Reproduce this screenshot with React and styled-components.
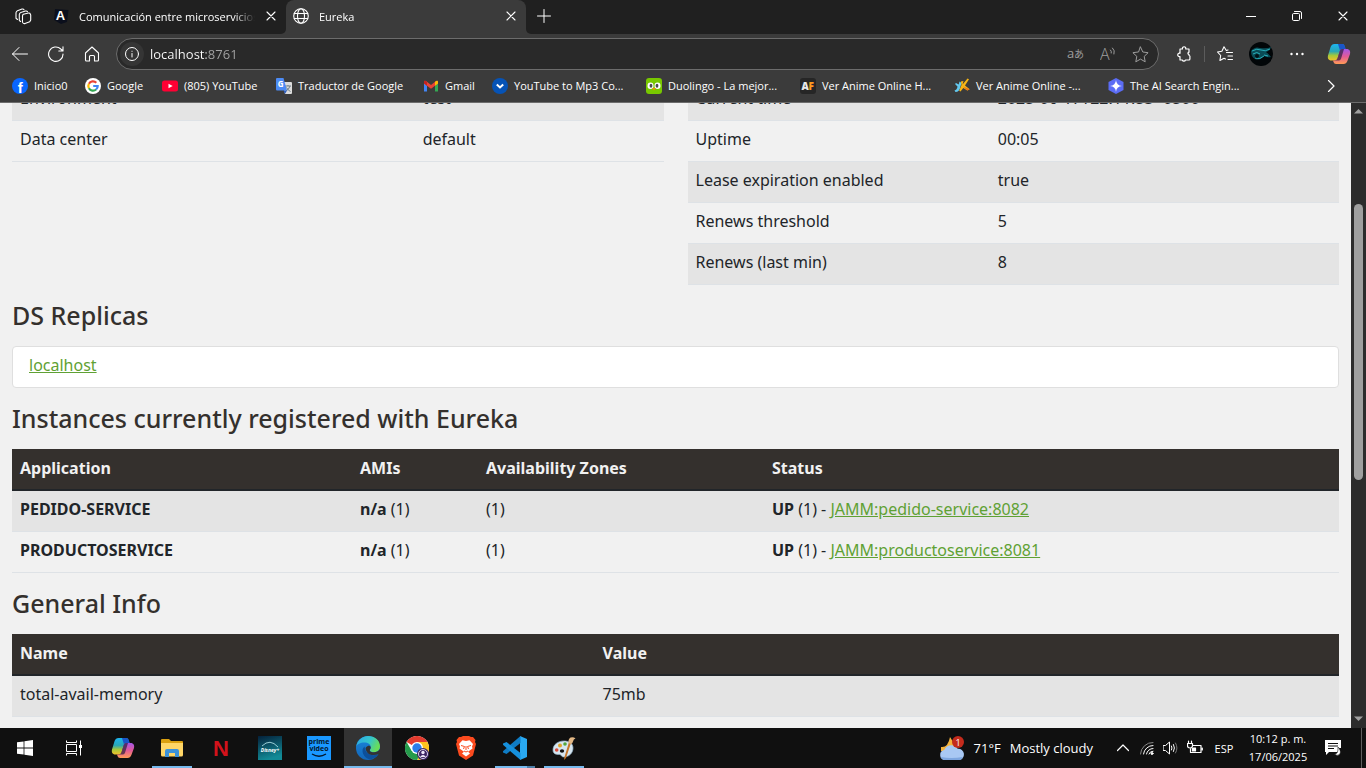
import React from 'react';
import styled, { createGlobalStyle } from 'styled-components';

const UI_FONT = '"Open Sans", "Noto Sans", sans-serif';
const PAGE_FONT = '"Noto Sans", "Open Sans", sans-serif';

const GlobalStyle = createGlobalStyle`
  *, *::before, *::after { box-sizing: border-box; }
  body { margin: 0; background: #f1f1f1; font-family: ${UI_FONT}; }
  button, input { font-family: inherit; }
  svg { display: block; flex: none; }
`;

const Screen = styled.div`
  display: flex;
  flex-direction: column;
  height: 100vh;
  overflow: hidden;
`;

/* ---------- tab strip ---------- */
const TabStrip = styled.nav`
  display: flex;
  height: 34px;
  flex: none;
  background: #3b3b3b;
  color: #fff;
`;
const StripStart = styled.div`
  display: flex;
  background: #202020;
  border-radius: 0 0 5px 0;
`;
const StripEnd = styled.div`
  display: flex;
  flex: 1;
  background: #202020;
  border-radius: 0 0 0 5px;
`;
const ActiveBack = styled.div`
  background: linear-gradient(#202020 10px, #3b3b3b 10px);
`;
const IconButton = styled.button`
  display: flex;
  align-items: center;
  justify-content: center;
  flex: none;
  width: ${(p) => p.$w || 36}px;
  height: 32px;
  padding: 0;
  border: 0;
  background: none;
  color: ${(p) => p.$color || '#fff'};
`;
const Tab = styled.div`
  display: flex;
  align-items: center;
  gap: 10px;
  width: 240px;
  height: 34px;
  padding: 0 9px 2px 7px;
  font-size: 11px;
  background: ${(p) => (p.$active ? '#3b3b3b' : 'transparent')};
  border-radius: 8px 8px 0 0;
`;
const TabTitle = styled.span`
  flex: 1;
  overflow: hidden;
  white-space: nowrap;
  mask-image: linear-gradient(90deg, #000 88%, transparent);
`;
const CloseButton = styled(IconButton)`
  width: 12px;
  height: 16px;
`;
const WindowControls = styled.div`
  display: flex;
  margin-left: auto;
`;

/* ---------- toolbar ---------- */
const Toolbar = styled.header`
  display: flex;
  align-items: center;
  height: 40px;
  flex: none;
  padding: 0 2px;
  background: #3b3b3b;
`;
const AddressBar = styled.form`
  display: flex;
  align-items: center;
  flex: 1;
  height: 32px;
  margin: 0 8px 0 6px;
  padding-right: 2px;
  border: 1px solid #6c6c6c;
  border-radius: 16px;
  background: #292929;
`;
const SiteInfo = styled(IconButton)`
  width: 24px;
  height: 24px;
  margin: 0 6px 0 3px;
  border-radius: 12px;
  background: #353535;
`;
const UrlInput = styled.input`
  flex: 1;
  min-width: 0;
  padding: 0;
  border: 0;
  outline: 0;
  font-size: 13px;
  color: transparent;
  background: linear-gradient(90deg, #fff 56px, #a6a6a6 56px);
  background-clip: text;
`;
const Divider = styled.span`
  width: 1px;
  height: 16px;
  margin: 0 3px;
  background: #5c5c5c;
`;
const Bookmarks = styled.nav`
  display: flex;
  align-items: center;
  height: 29px;
  flex: none;
  padding: 0 18px 4px 12px;
  background: #3b3b3b;
  border-bottom: 1px solid #6c6c6c;
`;
const Bookmark = styled.a`
  display: flex;
  align-items: center;
  gap: 6px;
  flex: none;
  width: ${(p) => p.$w}px;
  font-size: 11px;
  line-height: 16px;
  color: #fff;
  text-decoration: none;
  white-space: nowrap;
`;

/* ---------- page ---------- */
const Viewport = styled.div`
  display: flex;
  flex: 1;
  min-height: 0;
  overflow: hidden;
`;
const Page = styled.main`
  flex: 1;
  min-width: 0;
  margin-top: -23px;
  padding: 0 12px;
  font-family: ${PAGE_FONT};
  font-size: 16px;
  line-height: 24px;
  color: #212529;
`;
const Columns = styled.section`
  display: grid;
  grid-template-columns: 1fr 1fr;
  gap: 24px;
  align-items: start;
`;
const Heading = styled.h1`
  margin: 15px 0 16px;
  font-size: 25px;
  line-height: 30px;
  font-weight: 500;
  color: #34302d;
`;
const DataTable = styled.table`
  width: 100%;
  table-layout: fixed;
  border-collapse: separate;
  border-spacing: 0;
`;
const Th = styled.th`
  width: ${(p) => p.$w || 'auto'};
  padding: 7px 8px 9px;
  text-align: left;
  color: #f1f1f1;
  background: #34302d;
  border-bottom: 2px solid #212529;
`;
const Td = styled.td`
  width: ${(p) => p.$w || 'auto'};
  padding: 6px 8px 10px;
  border-bottom: 1px solid #dee2e6;
  white-space: nowrap;
`;
const Row = styled.tr`
  background: ${(p) => (p.$striped ? '#e4e4e4' : 'transparent')};
`;
const GreenLink = styled.a`
  color: #5fa134;
  text-decoration: underline;
`;
const ReplicaList = styled.ul`
  margin: 0;
  padding: 0;
  list-style: none;
  background: #fff;
  border: 1px solid #dfdfdf;
  border-radius: 4px;
`;
const ReplicaItem = styled.li`
  padding: 6px 16px 10px;
`;
const ScrollTrack = styled.div`
  display: flex;
  flex-direction: column;
  align-items: center;
  width: 15px;
  padding: 4px 0 5px;
  background: #2c2c2c;
`;
const TrackSpace = styled.div`
  flex: ${(p) => p.$part};
`;
const ScrollThumb = styled.div`
  flex: 276;
  width: 9px;
  border-radius: 5px;
  background: #9f9f9f;
`;

/* ---------- taskbar ---------- */
const Taskbar = styled.footer`
  display: flex;
  height: 40px;
  flex: none;
  background: #101010;
  color: #fff;
`;
const Apps = styled.div`
  display: flex;
  gap: 1px;
  padding-left: 1px;
`;
const AppButton = styled.button`
  display: flex;
  position: relative;
  align-items: center;
  justify-content: center;
  width: 48px;
  height: 40px;
  padding: 0;
  border: 0;
  background: ${(p) => (p.$active ? '#333' : 'none')};
  &::after {
    content: '';
    position: absolute;
    bottom: 0;
    left: ${(p) => (p.$active ? 0 : 4)}px;
    right: ${(p) => (p.$active ? 0 : 4)}px;
    height: 2px;
    background: ${(p) => (p.$stacked ? 'linear-gradient(90deg, #76b9ed 32px, #4d7fa8 32px)' : '#76b9ed')};
    display: ${(p) => (p.$open ? 'block' : 'none')};
  }
`;
const Tray = styled.div`
  display: flex;
  align-items: center;
  margin-left: auto;
`;
const Weather = styled.button`
  display: flex;
  align-items: center;
  gap: 9px;
  height: 40px;
  padding: 0;
  margin-right: 18px;
  border: 0;
  background: none;
  color: #fff;
  font-size: 13px;
`;
const Clock = styled.button`
  width: 74px;
  height: 38px;
  padding: 0 0 1px;
  border: 0;
  background: none;
  color: #fff;
  font-size: 11px;
  line-height: 18px;
`;
const ShowDesktop = styled.button`
  width: 5px;
  height: 40px;
  margin-left: 10px;
  padding: 0;
  border: 0;
  border-left: 1px solid #5e5e5e;
  background: none;
`;
const TrayText = styled.span`
  font-size: 11px;
`;

/* ---------- icons ---------- */
const Line = ({ s = 20, w = 1, vb = 20, children, ...rest }) => (
  <svg width={s} height={s} viewBox={`0 0 ${vb} ${vb}`} fill="none" stroke="currentColor" strokeWidth={w} strokeLinecap="round" strokeLinejoin="round" aria-hidden="true" {...rest}>
    {children}
  </svg>
);
const Art = ({ s = 16, vb = s, children }) => (
  <svg width={s} height={s} viewBox={`0 0 ${vb} ${vb}`} aria-hidden="true">{children}</svg>
);
const Workspaces = () => (
  <Line s={18} vb={18} w={1.1}>
    <path d="M9.300 7.200 14.500 6q1.500-.2 1.700 1l.5 1v5l-1 1.800-4.700 1.800q-1.500.3-2.200-.8-.6-1-.3-3V9q.2-1.500 .8-1.800Z" />
    <path d="M6.500 14.500 5.300 13.300V7.500q.2-1.500 1.500-2L11.500 4q1.500-.3 2 .8M3.500 12.500 2 11.300V5.700q.2-1.500 1.500-2L8 2q1.500-.3 2 .8" />
  </Line>
);
const Close = ({ s = 10 }) => <Line s={s} vb={10} w={1.1}><path d="m1 1 8 8M9 1 1 9" /></Line>;
const Globe = () => (
  <Line s={16} vb={16} w={1.1}>
    <circle cx="8" cy="8" r="7.300" /><ellipse cx="8" cy="8" rx="3.500" ry="7.300" /><path d="M1.300 5.500h13.400M1.300 10.500h13.400" />
  </Line>
);
const CopilotMark = ({ s }) => (
  <Art s={s} vb={24}>
    <defs>
      <linearGradient id="cpa" x1="0" y1="0" x2="0" y2="1"><stop offset="0" stopColor="#1db5f0" /><stop offset=".45" stopColor="#2aa7b5" /><stop offset=".7" stopColor="#a6c83a" /><stop offset="1" stopColor="#f2c12b" /></linearGradient>
      <linearGradient id="cpb" x1="0" y1="0" x2="0" y2="1"><stop offset="0" stopColor="#a456e8" /><stop offset=".5" stopColor="#e25a96" /><stop offset="1" stopColor="#ff9a55" /></linearGradient>
    </defs>
    <path d="M15 2q2 0 2.500 2l.9 3H15q-1.500 0-2 1.500l-2.500 8Q9.700 18.500 8 18.500H4.500C1.200 18.500.4 16 1 13.500L3.600 5Q4.700 2 7.500 2Z" fill="url(#cpa)" />
    <path d="M11 2h4.500q1.800 0 2.300 2l.9 3H15q-1.500 0-2 1.500Z" fill="#1a55c8" />
    <path d="M9 22q-2 0-2.500-2L6 18.500h2q1.700 0 2.500-2l2.500-8Q13.500 7 15 7h4.500c3.300 0 4.100 2.500 3.500 5L20.400 19q-1.100 3-3.900 3Z" fill="url(#cpb)" />
    <path d="M13 8.500 10.500 16.500q-.7 2-2.500 2h4q1.500 0 2-1.700L17 7h-2q-1.500 0-2 1.500Z" fill="#2b1f3c" opacity=".7" />
  </Art>
);
const Avatar = () => (
  <Art s={24}>
    <circle cx="12" cy="12" r="12" fill="#020608" />
    <path d="M2 9q4-5 9-3 7 1 11-1-1 4-5 5 3 2 5 5-4 1-7-1-4 5-9 3-4-2-4-8Z" fill="#0d5e6a" opacity=".8" />
    <path d="M3 9q5-3 9-1t9-1M4 12q4-3 7 0M15 13l4 1M6 16q5 2 9-2" fill="none" stroke="#2bb9c4" strokeWidth=".9" />
    <circle cx="8" cy="14" r="2" fill="#031216" />
  </Art>
);
const Facebook = () => (
  <Art><circle cx="8" cy="8" r="8" fill="#0866ff" /><text x="8.300" y="14.500" textAnchor="middle" fontSize="15" fontWeight="700" fill="#fff" fontFamily="Liberation Sans">f</text></Art>
);
const Google = () => (
  <Art>
    <circle cx="8" cy="8" r="8" fill="#fff" />
    <g fill="none" strokeWidth="2.200"><path d="M11.300 4.700A4.700 4.700 0 0 0 3.900 5.800" stroke="#ea4335" /><path d="M3.900 5.800a4.700 4.700 0 0 0 0 4.500" stroke="#fbbc05" /><path d="M3.900 10.300a4.700 4.700 0 0 0 7.200 1.200" stroke="#34a853" /><path d="M11.100 11.500A4.500 4.500 0 0 0 12.700 8H8.200" stroke="#4285f4" /></g>
  </Art>
);
const YouTube = () => <Art><rect y="2.500" width="16" height="11" rx="2.500" fill="#ff0033" /><path d="m6.500 5.700 4.200 2.300-4.200 2.300Z" fill="#fff" /></Art>;
const Translate = () => (
  <Art>
    <path d="M6 4h9q1 0 1 1v10q0 1-1 1H9Z" fill="#dcdcdc" /><path d="M9 8h6M12 7v1M10 13q3-1.500 4-5M10.500 9.500q1.500 3 4 4" stroke="#70808a" fill="none" />
    <path d="M1 0h6.500L11 12.500H1q-1 0-1-1V1q0-1 1-1Z" fill="#4c8bf5" /><path d="m7.500 12.500 3.500 0L9 16Z" fill="#2b5cc0" />
    <text x="1.800" y="9" fontSize="8" fontWeight="700" fill="#fff" fontFamily="Open Sans">G</text>
  </Art>
);
const Gmail = () => (
  <Art><path d="M1 4.500v9h3v-6Z" fill="#4285f4" /><path d="M15 4.500v9h-3v-6Z" fill="#34a853" /><path d="M1 5.500V4q0-2 2-1l5 4 5-4q2-1 2 1v1.500L8 10.800Z" fill="#ea4335" /><path d="M12 4.100 13 3q2-1 2 1v1.500l-3 2.200Z" fill="#fbbc04" /><path d="M4 4.100 3 3Q1 2 1 4v1.500l3 2.200Z" fill="#c5221f" /></Art>
);
const DownBadge = () => <Art><circle cx="8" cy="8" r="8" fill="#0653b6" /><path d="m4.800 6.500 3.200 3 3.200-3" stroke="#fff" strokeWidth="2" fill="none" /></Art>;
const Duo = () => (
  <Art><rect width="16" height="16" rx="3" fill="#78c800" /><ellipse cx="4.500" cy="7.800" rx="3" ry="3.300" fill="#fff" /><ellipse cx="11.500" cy="7.800" rx="3" ry="3.300" fill="#fff" /><ellipse cx="5" cy="7.800" rx="1.400" ry="2" fill="#4b4b4b" /><ellipse cx="11" cy="7.800" rx="1.400" ry="2" fill="#4b4b4b" /><path d="M6 10h4l-2 2.500Z" fill="#f49000" /></Art>
);
const AnimeF = () => (
  <Art><rect width="16" height="16" rx="3" fill="#262626" /><text x="1.500" y="12" fontSize="10" fontWeight="800" fill="#e8e8e8" fontFamily="Open Sans">A</text><text x="8.500" y="12" fontSize="10" fontWeight="800" fill="#ff9a1f" fontFamily="Open Sans">F</text></Art>
);
const Jk = () => (
  <Art><path d="M5.500 3.500 7.500 5 6.300 9Q5.500 14 1.500 14L.5 12.500q2.500-.5 3-4L1 6l1-1 2.700 1.500Z" fill="#63c8ee" /><path d="M9.500 3 8.500 6.500 13.500.5l1.500.8L11 7.500l4.700 3.800-2.400 1.200L9.300 10 6.500 13.500l-1.300-.7L7.500 7l-.7-3.500Z" fill="#f6b516" /><path d="m9 8.500 6.700 2.800-2.400 1.200Z" fill="#e9711a" /></Art>
);
const AiSearch = () => <Art><path d="m8 0 7.500 4v8L8 16 .5 12V4Z" fill="#5b6cf5" /><path d="M8 2q.4 5.600 6 6-5.600.4-6 6-.4-5.600-6-6 5.600-.4 6-6Z" fill="#fff" /></Art>;
const ALogo = () => (
  <Art><path d="M2 1 15.500 2 14 14l-6 2-7-4Z" fill="#0b0f1c" /><text x="7.500" y="12" textAnchor="middle" fontSize="13" fontWeight="700" fill="#fff" fontFamily="Liberation Sans">A</text></Art>
);
const WindowsMark = () => <Art><path d="M0 2.300 6.600 1.400v6.200H0ZM7.400 1.300 16 0v7.600H7.400ZM0 8.400h6.600v6.200L0 13.700ZM7.400 8.400H16V16l-8.600-1.200Z" fill="#fff" /></Art>;
const TaskView = () => <Art><path d="M.5.5v2h10v-2M.5 15.500v-2h10v2M.5 4.500h10v7H.5ZM14.500.5v15" fill="none" stroke="#fff" /><rect x="13" y="5" width="3" height="3" fill="#fff" /></Art>;
const Explorer = () => (
  <Art s={24}><path d="M1 4q0-1 1-1h7l2 2h11q1 0 1 1v3H1Z" fill="#dba010" /><path d="M1 7h22v12q0 1.500-1.500 1.500h-19Q1 20.500 1 19Z" fill="#ffd667" /><path d="M5 21v-6q0-2 2-2h10q2 0 2 2v6h-4v-4H9v4Z" fill="#3d92d8" /></Art>
);
const Netflix = () => <Art s={24}><text x="12" y="20" textAnchor="middle" fontSize="22" fontWeight="700" fill="#d3121b" fontFamily="Liberation Sans Narrow, Liberation Sans">N</text></Art>;
const Disney = () => (
  <Art s={24}><defs><linearGradient id="dis" x1="0" y1="0" x2=".3" y2="1"><stop offset="0" stopColor="#04203a" /><stop offset="1" stopColor="#128a96" /></linearGradient></defs><rect width="24" height="24" fill="url(#dis)" /><path d="M4 10Q12 2 20 11" fill="none" stroke="#bdeef2" strokeWidth=".8" /><text x="12" y="16" textAnchor="middle" fontSize="5" fontStyle="italic" fontWeight="700" fill="#fff" fontFamily="Open Sans">Disney+</text></Art>
);
const Prime = () => (
  <Art s={24}><rect width="24" height="24" fill="#1a98ff" /><g fontFamily="Open Sans" fontWeight="700" fontSize="7" fill="#04172b" textAnchor="middle"><text x="12" y="8">prime</text><text x="12" y="15">video</text></g><path d="M5 18q7 4.500 14 0" fill="none" stroke="#04172b" strokeWidth="1.300" /></Art>
);
const Edge = () => (
  <Art s={24}>
    <defs><linearGradient id="ed1" x1="0" y1="0" x2="1" y2=".4"><stop offset="0" stopColor="#2aa7ea" /><stop offset=".6" stopColor="#36c6c9" /><stop offset="1" stopColor="#68dd5a" /></linearGradient><linearGradient id="ed2" x1="0" y1="0" x2="0" y2="1"><stop offset="0" stopColor="#1a86dd" /><stop offset="1" stopColor="#1266b8" /></linearGradient></defs>
    <circle cx="12" cy="12" r="12" fill="url(#ed2)" />
    <path d="M.2 10.500C1.500 3.500 7 0 12 0c7 0 12 4.800 12 10.300 0 3.700-2.600 6-6 6-3 0-4.200-1.100-4.200-2 0-.8 1-1 1-3C14.800 8.500 12 6.500 8.500 6.500 4 6.500 1 8.500.2 10.500Z" fill="url(#ed1)" />
    <path d="M8.500 10.500Q5.500 13 7 17.500 9 22.500 14.500 23.500 20 22 22.500 18q-4 2-8.500.5-5-2-5.500-8Z" fill="#0c4f9a" />
    <path d="M13.800 14.300q0 2 4.200 2 3.500 0 6-3.300l0 3-1.300 2q-4.500 1.800-8.800.4Q10 17 9.500 12q1-2 3.500-2.500 2 .8 1.800 2.500-.9 1-1 2.300Z" fill="#333" />
  </Art>
);
const Chrome = () => (
  <Art s={24}>
    <circle cx="12" cy="12" r="12" fill="#fff" /><path d="M12 12 1.600 6A12 12 0 0 1 22.400 6Z" fill="#e33b2e" /><path d="M22.400 6A12 12 0 0 1 12 24l5-9-5-9Z" fill="#fcc31e" /><path d="M1.600 6A12 12 0 0 0 12 24l5-9-10.200 0Z" fill="#259b4b" /><circle cx="12" cy="12" r="6" fill="#fff" /><circle cx="12" cy="12" r="4.700" fill="#2a7de9" />
    <circle cx="18" cy="18" r="6" fill="#3b2363" /><circle cx="18" cy="18" r="4.500" fill="none" stroke="#d8cfe8" /><circle cx="18" cy="16.500" r="1.700" fill="#f1e9fb" /><path d="M15 21q3-4 6 0Z" fill="#f1e9fb" />
  </Art>
);
const Brave = () => (
  <Art s={24}><path d="m7 1 2-1h6l2 1h2l2.500 3-.5 2 1 2-3 11.500L12 24l-7-4.500L2 8l1-2-.5-2L5 1Z" fill="#fb4a1e" /><path d="m12 5 3.500-.7L19 8l-1 2.500.5 2-3.500 2.500-1 .8 2 1.700-4 3-4-3 2-1.700L9 15l-3.500-2.500.5-2L5 8l3.500-3.700Z" fill="#fff" /><path d="m7 9.500 3.500 1-1 2.500M17 9.500l-3.500 1 1 2.500M12 10v4M10 15l2 1 2-1" fill="none" stroke="#fb4a1e" /></Art>
);
const VsCode = () => (
  <Art s={24}><path d="m17 0 7 3v18l-7 3Z" fill="#29a9f2" /><path d="M17.500 0v7L3.500 18 0 16.500v-1.300Z" fill="#0f7cc4" /><path d="M17.500 24v-7L3.500 6 0 7.500v1.300Z" fill="#1690dc" /></Art>
);
const Paint = () => (
  <Art s={24}><path d="M1 14C1 8.500 6 5 12 5c5 0 9 2.500 9 7 0 5.500-4.500 9-9 9-3 0-2.500-2.500-4.500-2.500C5 18.500 1 18.500 1 14Z" fill="#d7e6f0" stroke="#93b3c8" strokeWidth=".7" /><circle cx="4.700" cy="14" r="1.800" fill="#d94b3a" /><circle cx="8" cy="9.500" r="2" fill="#e0a52c" /><circle cx="13" cy="8" r="1.800" fill="#53a83c" /><ellipse cx="10" cy="15" rx="2.200" ry="1.700" fill="#111" /><path d="M19 7 14 22l-2 2 .5-3L17 6Z" fill="#c7772a" /><path d="M16.500 7q-.5-4 2-5.500 3-1 5 1-2 .5-2.500 3-.5 2-2 2.500Z" fill="#e2b785" /></Art>
);
const CloudMoon = () => (
  <Art s={26}><path d="M11 2q4 7 8 9l-6 6-11-1 0-4q7 1 9-10Z" fill="#f5b23c" /><path d="M6 25a5 5 0 0 1-.8-9.900 7.500 7.500 0 0 1 13.500-1.300A5.600 5.600 0 0 1 20 25Z" fill="#a9c8f3" /><path d="M2 22q10 2 22 0-1 3-4 3H6q-3 0-4-3Z" fill="#7ea6df" /><circle cx="19" cy="7" r="6" fill="#c42b1c" /><text x="19" y="10.500" textAnchor="middle" fontSize="9" fill="#fff" fontFamily="Open Sans">1</text></Art>
);

/* ---------- data ---------- */
const bookmarks = [
  ['Inicio0', 73, Facebook], ['Google', 77, Google], ['(805) YouTube', 114, YouTube],
  ['Traductor de Google', 147, Translate], ['Gmail', 69, Gmail], ['YouTube to Mp3 Co...', 154, DownBadge],
  ['Duolingo - La mejor...', 154, Duo], ['Ver Anime Online H...', 154, AnimeF],
  ['Ver Anime Online -...', 154, Jk], ['The AI Search Engin...', 154, AiSearch],
];
const environment = [['Environment', 'test'], ['Data center', 'default']];
const status = [
  ['Current time', '2025-06-17T22:11:53 -0500'], ['Uptime', '00:05'],
  ['Lease expiration enabled', 'true'], ['Renews threshold', '5'], ['Renews (last min)', '8'],
];
const instances = [
  ['PEDIDO-SERVICE', 'JAMM:pedido-service:8082'],
  ['PRODUCTOSERVICE', 'JAMM:productoservice:8081'],
];
const apps = [
  ['Start', <WindowsMark />], ['Task view', <TaskView />], ['Copilot', <CopilotMark s={24} />],
  ['File Explorer', <Explorer />, { $open: true }], ['Netflix', <Netflix />], ['Disney+', <Disney />],
  ['Prime Video', <Prime />], ['Edge', <Edge />, { $open: true, $active: true }], ['Chrome', <Chrome />],
  ['Brave', <Brave />], ['Visual Studio Code', <VsCode />, { $open: true, $stacked: true }],
  ['Paint', <Paint />, { $open: true }],
];

const PairTable = ({ rows, first }) => (
  <DataTable>
    <tbody>
      {rows.map(([name, value], i) => (
        <Row key={name} $striped={i % 2 === 0}><Td $w={first}>{name}</Td><Td>{value}</Td></Row>
      ))}
    </tbody>
  </DataTable>
);

export default function App() {
  return (
    <Screen>
      <GlobalStyle />
      <TabStrip aria-label="Tabs">
        <StripStart>
          <IconButton $w={46} aria-label="Workspaces"><Workspaces /></IconButton>
          <Tab><ALogo /><TabTitle>Comunicación entre microservicios</TabTitle><CloseButton aria-label="Close tab"><Close /></CloseButton></Tab>
        </StripStart>
        <ActiveBack>
          <Tab $active><Globe /><TabTitle>Eureka</TabTitle><CloseButton aria-label="Close tab"><Close /></CloseButton></Tab>
        </ActiveBack>
        <StripEnd>
          <IconButton aria-label="New tab"><Line s={14} vb={14}><path d="M7 .5v13M.5 7h13" /></Line></IconButton>
          <WindowControls>
            <IconButton $w={46} aria-label="Minimize"><Line s={10} vb={10} strokeLinecap="butt"><path d="M0 5.500h10" /></Line></IconButton>
            <IconButton $w={46} aria-label="Restore"><Line s={10} vb={10}><path d="M.5 3.500q0-1 1-1h5q1 0 1 1v5q0 1-1 1h-5q-1 0-1-1ZM2.500.5H8q1.500 0 1.500 1.500v5.500" /></Line></IconButton>
            <IconButton $w={46} aria-label="Close window"><Close /></IconButton>
          </WindowControls>
        </StripEnd>
      </TabStrip>

      <Toolbar>
        <IconButton aria-label="Back"><Line s={16} vb={16}><path d="M15.500 8H.5M7 1.500.5 8 7 14.500" /></Line></IconButton>
        <IconButton aria-label="Reload"><Line s={16} vb={16} w={1.100}><path d="M15 8A7.200 7.200 0 1 1 12.800 3L15 5M15 .8V5h-4.200" /></Line></IconButton>
        <IconButton aria-label="Home"><Line s={16} vb={16} w={1.100}><path d="M1.500 7 8 1l6.500 6v7q0 1-1 1h-3v-4.500q0-1-1-1h-3q-1 0-1 1V15h-3q-1 0-1-1Z" /></Line></IconButton>
        <AddressBar>
          <SiteInfo type="button" aria-label="Site information"><Line s={14} vb={14}><circle cx="7" cy="7" r="6.500" /><path d="M7 6.500v3.500M7 4.200v.2" /></Line></SiteInfo>
          <UrlInput aria-label="Address" defaultValue="localhost:8761" />
          <IconButton type="button" $w={32} $color="#9d9d9d" aria-label="Translate"><svg width="18" height="16" viewBox="0 0 18 16"><text x="0" y="12" fontSize="13" fill="currentColor" fontFamily="Open Sans">a</text><text x="7" y="12" fontSize="10" fill="currentColor" fontFamily="Noto Sans CJK JP">あ</text></svg></IconButton>
          <IconButton type="button" $w={32} $color="#9d9d9d" aria-label="Read aloud"><Line s={16} vb={16}><text x="0" y="14" fontSize="16" fill="currentColor" stroke="none" fontFamily="Open Sans" fontWeight="300">A</text><path d="M10.500 4q1.200 1 .8 3M12.500 2q2.800 2.500 1.500 6" /></Line></IconButton>
          <IconButton type="button" $w={32} $color="#9d9d9d" aria-label="Add to favorites"><Line s={17} vb={17}><path d="m8.500 1 2.300 5 5.300.7-3.900 3.700 1 5.400-4.700-2.700-4.700 2.700 1-5.400L.9 6.700 6.200 6Z" /></Line></IconButton>
        </AddressBar>
        <IconButton $w={34} aria-label="Extensions"><Line s={16} vb={16} w={1.200}><path d="M4 3h2.500a1.700 1.700 0 1 1 3.200 0H13v3.200a1 1 0 0 0-1 1.300q.2.800 1 1v.5a1 1 0 0 0 .9 1V13q0 1-1 1H9.500a1.700 1.700 0 0 1-3.200 0H4v-3.500a1.700 1.700 0 1 1 0-3.200Z" /></Line></IconButton>
        <Divider />
        <IconButton $w={34} aria-label="Favorites"><Line s={16} vb={16} w={1.100}><path d="M9.500 6.500h6M11 10h4.500M11 13.500h4.500M11 4 9.300 4.500 7 .8 4.900 5.300.5 6l3.200 3.500-.8 5 4.100-2.300 1.500.8" /></Line></IconButton>
        <IconButton $w={38} aria-label="Profile"><Avatar /></IconButton>
        <IconButton $w={34} aria-label="More"><Line s={14} vb={14} stroke="none"><circle cx="1.500" cy="7" r="1.200" fill="currentColor" /><circle cx="7" cy="7" r="1.200" fill="currentColor" /><circle cx="12.500" cy="7" r="1.200" fill="currentColor" /></Line></IconButton>
        <IconButton $w={50} aria-label="Copilot"><CopilotMark s={24} /></IconButton>
      </Toolbar>

      <Bookmarks aria-label="Favorites bar">
        {bookmarks.map(([name, w, Icon]) => <Bookmark key={name} href="#" $w={w}><Icon />{name}</Bookmark>)}
        <WindowControls><IconButton $w={34} aria-label="More favorites"><Line s={12} vb={12} w={1.200}><path d="m3.500.5 5.500 5.500-5.500 5.500" /></Line></IconButton></WindowControls>
      </Bookmarks>

      <Viewport>
        <Page>
          <Columns>
            <PairTable rows={environment} first="61.8%" />
            <PairTable rows={status} first="46.4%" />
          </Columns>
          <Heading>DS Replicas</Heading>
          <ReplicaList><ReplicaItem><GreenLink href="#">localhost</GreenLink></ReplicaItem></ReplicaList>
          <Heading>Instances currently registered with Eureka</Heading>
          <DataTable>
            <thead><tr><Th $w="340px">Application</Th><Th $w="126px">AMIs</Th><Th $w="286px">Availability Zones</Th><Th>Status</Th></tr></thead>
            <tbody>
              {instances.map(([name, link], i) => (
                <Row key={name} $striped={i % 2 === 0}>
                  <Td><b>{name}</b></Td><Td><b>n/a</b> (1)</Td><Td>(1)</Td>
                  <Td><b>UP</b> (1) - <GreenLink href="#">{link}</GreenLink></Td>
                </Row>
              ))}
            </tbody>
          </DataTable>
          <Heading>General Info</Heading>
          <DataTable>
            <thead><tr><Th $w="43.9%">Name</Th><Th>Value</Th></tr></thead>
            <tbody><Row $striped><Td>total-avail-memory</Td><Td>75mb</Td></Row></tbody>
          </DataTable>
        </Page>
        <ScrollTrack>
          <Art s={9}><path d="M0 6.500h9L4.500 2Z" fill="#a0a0a0" /></Art>
          <TrackSpace $part={88} /><ScrollThumb /><TrackSpace $part={234} />
          <Art s={9}><path d="M0 2.500h9L4.500 7Z" fill="#a0a0a0" /></Art>
        </ScrollTrack>
      </Viewport>

      <Taskbar>
        <Apps>{apps.map(([name, icon, state]) => <AppButton key={name} aria-label={name} {...state}>{icon}</AppButton>)}</Apps>
        <Tray>
          <Weather><CloudMoon /><span>71°F</span><span>Mostly cloudy</span></Weather>
          <IconButton $w={24} aria-label="Hidden icons"><Line s={12} vb={12} w={1.200}><path d="M.5 8.500 6 3l5.500 5.500" /></Line></IconButton>
          <IconButton $w={24} aria-label="Wi-Fi"><Line s={14} vb={14}><path d="M.5 13A12 12 0 0 1 13 1.500" stroke="#8a8a8a" /><path d="M3.500 13A9.500 9.500 0 0 1 13 4.500M6.500 13A6.500 6.500 0 0 1 13 7.500M9 13a4 4 0 0 1 4-2.800" /><circle cx="12" cy="12.500" r="1" fill="currentColor" /></Line></IconButton>
          <IconButton $w={24} aria-label="Volume"><Line s={16} vb={16}><path d="M.5 5.500h2L6.500 2v12L2.500 10.500h-2ZM8.500 6q1 2 0 4M10.500 4.500q2 3.500 0 7" /><path d="M12.500 3q3 5 0 10" stroke="#777" /></Line></IconButton>
          <IconButton $w={24} aria-label="Battery"><Line s={16} vb={16} w={1.200}><path d="M5.500 5.500H14v7H3.500V9M15.300 8v2M.5 3.500h5v2Q5.500 8 3 8T.5 5.500ZM1.500 1v2M4.500 1v2" /><path d="M5.500 8h3v3h-3Z" fill="currentColor" /></Line></IconButton>
          <IconButton $w={34}><TrayText>ESP</TrayText></IconButton>
          <Clock>10:12 p. m.<br />17/06/2025</Clock>
          <IconButton $w={36} aria-label="Notifications"><Art s={16}><path d="M0 0h16v8h-3v4H4l-3 3v-3H0Z" fill="#fff" /><path d="M3 3.500h10M3 6h10M3 8.500h6" stroke="#101010" /><path d="M13 7q4 4 1.500 7.500-2.500 2-5-.5 4 0 3.500-7Z" fill="#fff" stroke="#101010" strokeWidth=".6" /></Art></IconButton>
          <ShowDesktop aria-label="Show desktop" />
        </Tray>
      </Taskbar>
    </Screen>
  );
}
